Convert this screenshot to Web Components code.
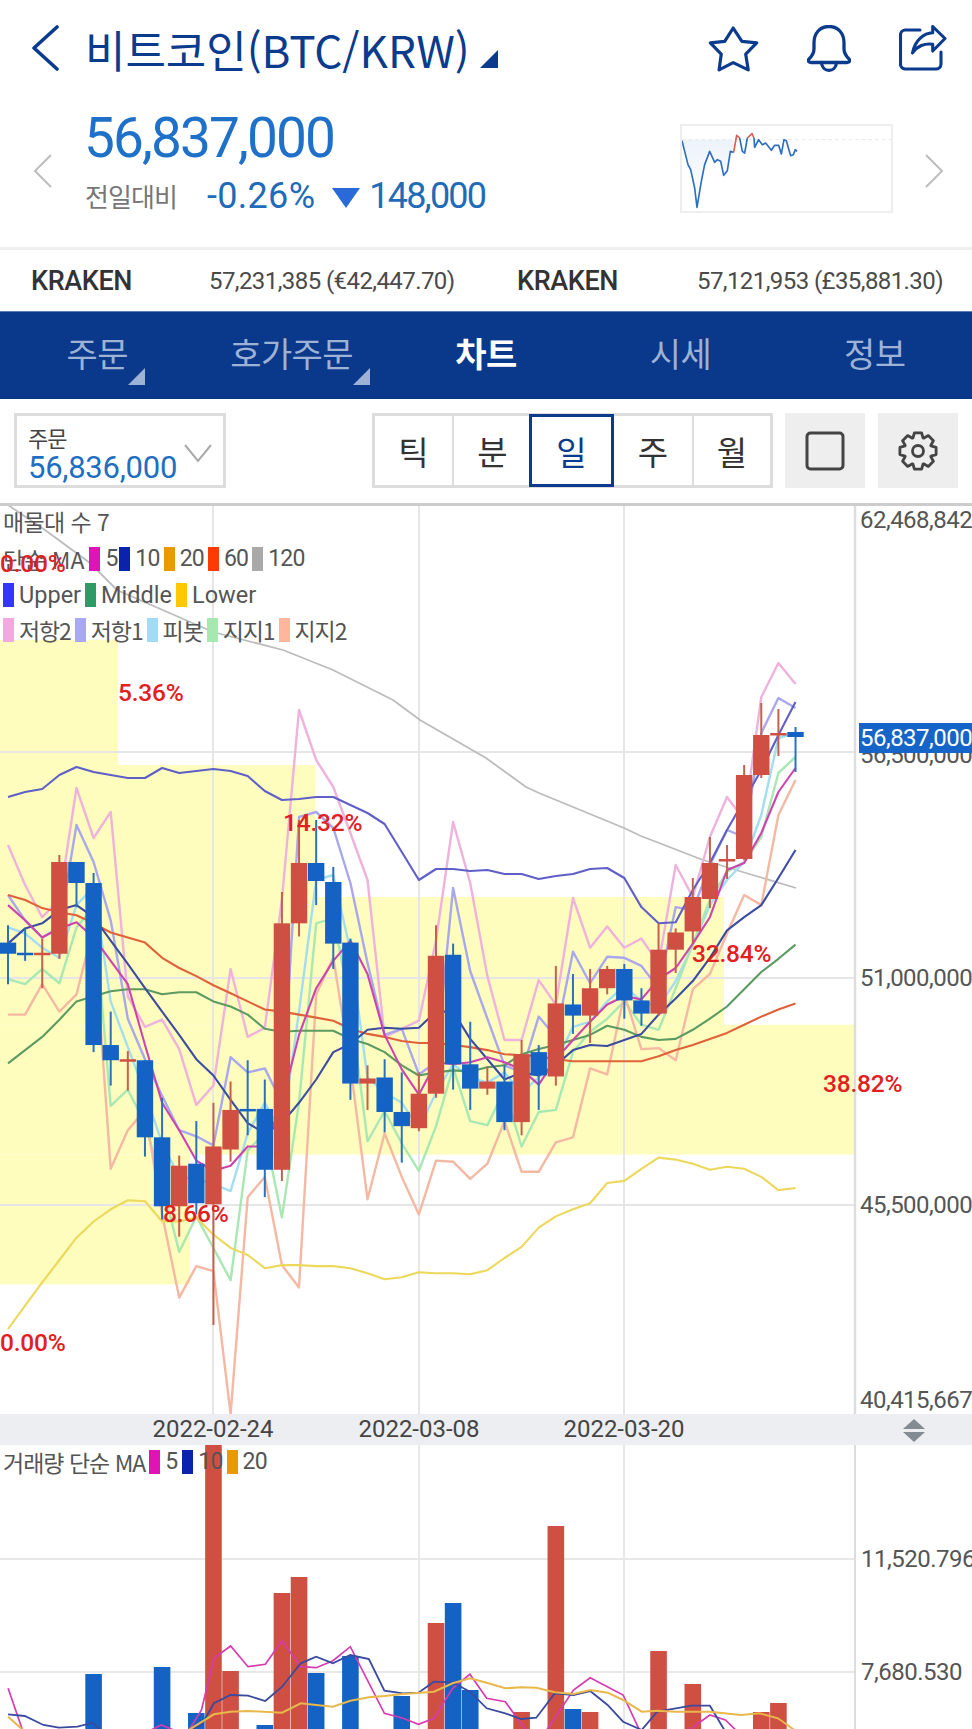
<!DOCTYPE html>
<html lang="ko"><head><meta charset="utf-8"><title>BTC</title>
<style>
html,body{margin:0;padding:0;background:#fff}
body{width:972px;height:1729px;overflow:hidden;font-family:"Noto Sans CJK KR","Noto Sans",sans-serif}
</style></head><body>
<coin-header>비트코인(BTC/KRW)</coin-header>
<price-panel></price-panel>
<exchange-row></exchange-row>
<nav-tabs></nav-tabs>
<chart-toolbar></chart-toolbar>
<candle-chart></candle-chart>
<time-axis></time-axis>
<volume-chart></volume-chart>
<script>
const FONT='"Noto Sans CJK KR","Noto Sans",sans-serif';
const NUM='Roboto,"Noto Sans CJK KR",sans-serif';
const NAVY='#0b3b8c';
class Base extends HTMLElement{
  constructor(){super();this.attachShadow({mode:'open'}).innerHTML=this.render();}
}
class CoinHeader extends Base{render(){return `<style>
:host{display:flex;align-items:flex-start;height:100px;box-sizing:border-box;padding:25px 25px 0 31px;color:${NAVY};position:relative}
.t{font:400 44px/46px ${FONT};letter-spacing:-.05px;margin:1px 0 0 26px;white-space:nowrap}
.tri{margin:25px 0 0 10px;flex:none}
.r{margin-left:auto;display:flex;gap:48px;align-items:flex-start}
svg{display:block;fill:none;stroke:${NAVY};stroke-linecap:round;stroke-linejoin:round;flex:none}
</style>
<svg width="28" height="46" viewBox="0 0 28 46" stroke-width="3.6"><path d="M26 2 L3 23 L26 44"/></svg>
<span class="t"><slot></slot></span>
<svg class="tri" width="18" height="18" viewBox="0 0 18 18" style="stroke:none;fill:${NAVY}"><path d="M18 0V18H0Z"/></svg>
<div class="r">
<svg width="52" height="48" viewBox="-2.7 -1.7 55 51" stroke-width="3.4"><path d="M25 1.500L34.300 15.700L50 17.300L38.300 29.300L41 46L25 38.300L10 46L12.300 29.300L.7 17.300L16 15.700Z"/></svg>
<svg width="44" height="48" viewBox="0 0 44 48" stroke-width="3.3"><path d="M22 1.500C13 1.500 7 8 7 18V24C7 29 4 32 2 34C.5 36 1.500 37.500 4 37.500H40C42.500 37.500 43.500 36 42 34C40 32 37 29 37 24V18C37 8 31 1.500 22 1.500Z"/><path d="M14.500 37.500C15 48 29 48 29.500 37.500"/></svg>
<svg width="48" height="46" viewBox="0 0 48 46" stroke-width="3.100"><path d="M21 5H6A5 5 0 0 0 1.500 10V39A5 5 0 0 0 6 44H37A5 5 0 0 0 42 39V27"/><path d="M13.500 28C16 15 25 8 33.700 7.700V1.500L46 13.500L33.700 26V19.300C26 18 18 21 13.500 28Z"/></svg>
</div>`}}
class PricePanel extends Base{render(){
 const pts=[[62,118],[70,150],[80,190],[88,205],[100,260],[107,318],[120,240],[130,190],[145,150],[160,183],[168,175],[178,180],[187,222],[198,208],[207,150],[217,153]];
 const p2=[[217,153],[226,102],[235,110]];
 const p3=[[235,110],[243,150],[250,155],[258,110]];
 const p4=[[258,110],[272,97],[278,110]];
 const p5=[[278,110],[280,138],[292,115],[303,130],[313,125],[330,147],[340,132],[352,132],[360,158],[368,115],[375,118],[388,163],[396,160],[402,145],[407,150]];
 const s=a=>a.map(p=>p.join(',')).join(' ');
 return `<style>
:host{display:flex;height:147px;position:relative;box-sizing:border-box;color:#1c68c0}
.arrow{position:absolute;top:54px;fill:none;stroke:#bdbdbd;stroke-width:2}
.col{margin-left:84px;padding-top:8px}
.big{font:400 55px/60px ${NUM};letter-spacing:-1.9px;color:#1f70c9}
.sub{display:flex;align-items:center;margin-top:10px;height:36px}
.l{font:400 26px/36px ${FONT};color:#777;letter-spacing:-.9px;width:123px;padding-left:1px;box-sizing:border-box}
.n{font:400 36px/36px ${NUM};letter-spacing:.3px;color:#1f6bb8}
.m{letter-spacing:-1.8px}
.dn{margin:3px 9px 0 17px;flex:none}
.mini{position:absolute;left:680px;top:24px;width:213px;height:89px;box-sizing:border-box;border:2px solid #eee}
</style>
<svg class="arrow" style="left:33px" width="20" height="34" viewBox="0 0 20 34"><path d="M18 1L2 17L18 33"/></svg>
<div class="col"><div class="big">56,837,000</div>
<div class="sub"><span class="l">전일대비</span><span class="n">-0.26%</span>
<svg class="dn" width="28" height="20" viewBox="0 0 28 20"><path d="M0 0H28L14 20Z" fill="#2a6ad8"/></svg>
<span class="n m">148,000</span></div></div>
<div class="mini"><svg width="209" height="85" viewBox="62 74 627 255" preserveAspectRatio="none" style="display:block;margin:0">
<defs><linearGradient id="g" x1="0" y1="0" x2="0" y2="1"><stop offset="0" stop-color="#edf3fb"/><stop offset="1" stop-color="#fff"/></linearGradient></defs>
<polygon points="${s(pts)} 217,115 62,115" fill="url(#g)"/>
<line x1="62" y1="115" x2="690" y2="115" stroke="#e6e6e6" stroke-width="3" stroke-dasharray="10 10"/>
<g fill="none" stroke-width="5" stroke-linejoin="round"><polyline points="${s(pts)}" stroke="#2f6fc0"/><polyline points="${s(p2)}" stroke="#d4605c"/><polyline points="${s(p3)}" stroke="#2f6fc0"/><polyline points="${s(p4)}" stroke="#d4605c"/><polyline points="${s(p5)}" stroke="#2f6fc0"/></g></svg></div>
<svg class="arrow" style="left:924px" width="20" height="34" viewBox="0 0 20 34"><path d="M2 1L18 17L2 33"/></svg>`}}
class ExchangeRow extends Base{render(){return `<style>
:host{display:block;border-top:3px solid #eee;height:64px;box-sizing:border-box;position:relative;color:#444}
.w{display:grid;grid-template-columns:178px 308px 180px 1fr;align-items:center;height:100%;padding:1px 0 0 31px;box-sizing:border-box}
b{font:500 27px/34px Roboto,sans-serif;letter-spacing:-.4px;color:#333}
span{font:400 24px/34px Roboto,sans-serif;letter-spacing:-.58px;color:#4a4a4a;white-space:nowrap}
</style><div class="w"><b>KRAKEN</b><span>57,231,385 (€42,447.70)</span><b>KRAKEN</b><span>57,121,953 (£35,881.30)</span></div>`}}
class NavTabs extends Base{render(){
 const t=[['주문',1],['호가주문',1],['차트',0,1],['시세'],['정보']];
 return `<style>
:host{display:grid;grid-template-columns:repeat(5,1fr);height:88px;background:#0a388a;border-top:1px solid #5b7fb5;box-sizing:border-box;color:#9db2d4}
div{display:flex;justify-content:center;align-items:center;font:400 34px/40px ${FONT};padding-bottom:5px;position:relative;letter-spacing:-.6px}
.on{color:#fff;font-weight:700}
span{position:relative}
svg{position:absolute;left:100%;top:35px;margin-left:0}
</style>${t.map(x=>`<div class="${x[2]?'on':''}"><span>${x[0]}${x[1]?'<svg width="17" height="17" viewBox="0 0 17 17"><path d="M17 0V17H0Z" fill="#9db2d4"/></svg>':''}</span></div>`).join('')}`}}
class ChartToolbar extends Base{render(){
 let g='';const N=8;for(let i=0;i<N;i++){const a=i/N*Math.PI*2-Math.PI/2,d=Math.PI/N;
  const P=(r,b)=>(20+r*Math.cos(b)).toFixed(1)+' '+(20+r*Math.sin(b)).toFixed(1);
  g+=(i?'L':'M')+P(14,a-d*.95)+'L'+P(18.500,a-d*.5)+'L'+P(18.500,a+d*.5)+'L'+P(14,a+d*.95);}
 return `<style>
:host{display:flex;height:107px;box-sizing:border-box;padding:14px 0 0 14px;border-bottom:3px solid #ccc;align-items:flex-start}
.sel{flex:none;width:212px;height:75px;box-sizing:border-box;border:3px solid #ddd;padding:9px 0 0 11px;position:relative}
.a{font:400 22px/24px ${FONT};color:#444;display:block;letter-spacing:-1px}
.b{font:400 31px/34px ${NUM};color:#1f6fc0;display:block;letter-spacing:-.25px;margin-top:2px;white-space:nowrap}
.sel svg{position:absolute;right:11px;top:27px}
.seg{flex:none;margin-left:146px;display:grid;grid-template-columns:77px 79px 81px 80px 78px;height:75px;box-sizing:border-box;border:3px solid #ddd;position:relative}
.seg div{display:flex;align-items:center;justify-content:center;font:400 33px/40px ${FONT};color:#333;border-left:2px solid #ddd}
.seg div:first-child{border-left:0}
.seg .on{color:${NAVY};outline:3px solid ${NAVY};outline-offset:-1px;z-index:1;border-left:0}
.btn{flex:none;width:80px;height:75px;background:#eee;display:flex;align-items:center;justify-content:center;margin-left:12px}
.btn+.btn{margin-left:13px}
</style>
<div class="sel"><span class="a">주문</span><span class="b">56,836,000</span><svg width="28" height="20" viewBox="0 0 28 20"><path d="M1 2L14 18L27 2" fill="none" stroke="#aaa" stroke-width="2"/></svg></div>
<div class="seg"><div>틱</div><div>분</div><div class="on">일</div><div>주</div><div>월</div></div>
<div class="btn"><svg width="40" height="40" viewBox="0 0 40 40"><rect x="2" y="2" width="36" height="36" rx="3.500" fill="none" stroke="#444" stroke-width="3"/></svg></div>
<div class="btn"><svg width="40" height="40" viewBox="0 0 40 40" fill="none" stroke="#444" stroke-width="2.800" stroke-linejoin="round"><path d="${g}Z"/><circle cx="20" cy="20" r="5.500"/></svg></div>`}}
const X=i=>8+17.12*i, Y=y=>y>900?900+(y-900)*1.0142:y;
const poly=(a,c,w=2.1)=>`<polyline fill="none" stroke="${c}" stroke-width="${w}" stroke-linejoin="round" points="${a.map((y,i)=>X(i).toFixed(1)+','+Y(y).toFixed(1)).join(' ')}"/>`;
const R2=[845,885,917,900,788,838,812,995,1025,1018,1047,1102,1083,968,1035,1026,900,710,760,787,833,880,1035,1027,1019,940,822,883,975,1038,1038,979,1003,898,947,926,947,938,963,865,897,837,797,820,697,663,684];
const R1=[895,920,937,927,825,862,920,1017,1057,1093,1127,1133,1142,1055,1070,1066,1100,817,812,828,883,962,1033,1027,1072,1060,888,970,1017,1063,1070,1015,1035,951,982,956,957,965,987,907,910,865,830,837,733,698,708];
const PV=[927,933,947,957,905,887,1000,1045,1090,1140,1173,1175,1180,1187,1130,1100,1130,1010,880,875,950,1075,1090,1100,1125,1090,1062,1075,1080,1070,1090,1075,1060,1025,1020,1000,985,1000,1005,980,945,905,880,862,815,738,733];
const S1=[978,983,968,982,927,907,1103,1087,1120,1180,1247,1212,1243,1275,1147,1130,1213,1100,923,918,1003,1138,1108,1140,1167,1123,1065,1118,1122,1087,1143,1109,1107,1050,1030,1017,1000,1023,1028,987,943,900,872,862,837,773,757];
const S2=[1013,1013,983,1010,993,927,1165,1127,1107,1210,1292,1261,1266,1407,1193,1173,1260,1282,993,957,1063,1195,1130,1173,1210,1157,1158,1175,1160,1118,1168,1168,1139,1134,1066,1072,993,1047,1046,1058,988,973,933,895,905,815,780];
const UP=[797,792,789,775,767,772,775,778,778,768,773,771,769,771,776,791,800,799,797,797,805,813,824,852,880,869,869,871,870,874,874,879,876,874,869,868,878,907,923,922,890,863,830,800,770,735,702];
const MD=[1061,1048,1035,1018,1000,995,990,988,988,993,991,991,1000,1005,1013,1027,1030,1029,1029,1029,1037,1042,1050,1063,1073,1070,1068,1069,1065,1063,1052,1047,1043,1038,1033,1024,1028,1035,1038,1037,1028,1017,1005,988,971,958,944];
const LO=[1323,1300,1277,1255,1233,1217,1205,1196,1197,1217,1217,1213,1230,1243,1250,1263,1260,1260,1261,1261,1263,1268,1274,1272,1267,1268,1268,1269,1265,1253,1242,1223,1212,1205,1199,1179,1177,1165,1154,1156,1160,1166,1163,1165,1173,1186,1184];
const M5=[905,920,937,928,922,937,960,983,1043,1100,1127,1157,1167,1162,1143,1143,1100,1033,987,960,940,973,1033,1067,1092,1060,1062,1060,1055,1060,1067,1082,1057,1038,1020,1003,995,998,978,967,943,917,870,863,833,792,768];
const M10=[943,928,923,910,905,917,940,963,987,1010,1033,1057,1073,1097,1120,1130,1120,1100,1077,1050,1042,1028,1026,1027,1026,1010,1010,1037,1057,1077,1070,1073,1063,1048,1043,1044,1038,1032,1013,997,980,957,930,917,905,878,850];
const M60=[895,900,908,912,915,923,932,937,942,957,967,975,984,992,1000,1008,1010,1013,1016,1019,1027,1032,1035,1039,1041,1041,1043,1045,1048,1052,1053,1054,1057,1059,1059,1059,1059,1059,1054,1048,1043,1037,1031,1023,1015,1008,1002];
const M120='8,505 45,530 90,563 117,590 213,632 283,650 333,670 393,700 420,720 486,758 526,787 539,793 573,807 624,828 641,836 703,860 746,873 796,888';
const C=[['b',942,953,925,983],['b',952,954,928,960],['r',952,954,938,987],['r',862,953,855,958],['b',862,883,862,907],['b',883,1043,873,1050],['b',1043,1058,1010,1083],['r',1057,1059,1049,1088],['b',1058,1134,1058,1153],['b',1134,1202,1095,1215],['r',1162,1202,1152,1232],['b',1160,1199,1118,1210],['r',1143,1200,1100,1319],['r',1107,1146,1079,1158],['b',1106,1108,1058,1132],['b',1106,1166,1077,1193],['r',923,1166,892,1177],['r',863,923,820,936],['b',863,881,820,905],['b',882,943,867,968],['b',942,1081,938,1097],['r',1076,1081,1063,1107],['b',1075,1109,1057,1129],['b',1109,1123,1070,1159],['r',1091,1125,1070,1128],['r',955,1091,925,1095],['b',954,1062,943,1087],['b',1062,1086,1020,1107],['r',1079,1086,1064,1092],['b',1079,1119,1063,1127],['r',1052,1119,1038,1132],['b',1050,1073,1043,1107],['r',1002,1074,965,1083],['b',1003,1014,973,1032],['r',987,1014,968,1041],['r',968,987,965,993],['b',968,999,963,1017],['b',999,1012,987,1024],['r',949,1012,923,1014],['r',932,949,928,972],['r',897,931,878,943],['r',863,899,837,908],['r',859,861,845,879],['r',775,859,765,860],['r',735,775,703,778],['r',733,735,709,756],['b',732,737,727,772]];
const candles=()=>C.map((c,i)=>{const x=X(i),col=c[0]=='r'?'#cf4f42':'#1463c4',wc=c[0]=='r'?'#c5604e':'#2a72bd';
 return `<line x1="${x}" x2="${x}" y1="${Y(c[3])}" y2="${Y(c[4])}" stroke="${wc}" stroke-width="2"/><rect x="${x-8.2}" width="16.4" y="${Y(c[1])}" height="${Math.max(Y(c[2])-Y(c[1]),2.500)}" fill="${col}"/>`}).join('');
class CandleChart extends Base{render(){
 const box=(w,a,b)=>`<rect x="0" y="${Y(a)}" width="${w}" height="${Y(b)-Y(a)}" fill="#fefdbd"/>`;
 const pct=[['0.00%',0,563],['5.36%',118,692],['14.32%',283,822],['8.66%',163,1213],['0.00%',0,1342],['32.84%',692,953],['38.82%',823,1083]];
 const ax=[['62,468,842',520],['56,500,000',755],['51,000,000',978],['45,500,000',1205],['40,415,667',1400]];
 const sw=(c,s='')=>`<i style="background:${c};${s}"></i>`;
 return `<style>
:host{display:block;height:908px;position:relative;overflow:hidden}
svg{position:absolute;left:0;top:0;display:block}
.p{font:500 24.500px ${NUM};fill:#e1201f;letter-spacing:-.2px}
.a{font:400 24px Roboto,sans-serif;fill:#555;letter-spacing:-.52px}
.leg{position:absolute;left:3px;top:0;display:flex;flex-direction:column;font:400 23px/26px ${NUM};color:#555}
.leg div{display:flex;align-items:center;height:36.500px;box-sizing:border-box;white-space:nowrap}
i{display:block;width:11px;height:24px;margin:0 5px 0 4px}
i:first-child{margin-left:0}
.ko{font-family:${FONT};letter-spacing:-1.1px}
.d{letter-spacing:-.8px}
.tag{position:absolute;left:859px;top:217px;width:113px;height:30px;background:#1565c8;color:#fff;font:400 24px/30px Roboto,sans-serif;letter-spacing:-.52px;padding-left:1px;box-sizing:border-box;white-space:nowrap;overflow:hidden}
</style>
<svg width="972" height="908" viewBox="0 506 972 908">
${box(118,640,765)}${box(315,765,897)}${box(724,897,1023)}${box(855,1023,1151)}${box(190,1151,1279)}
<g stroke="#e6e6e6" stroke-width="2">${[752,978,1205].map(y=>`<line x1="0" x2="855" y1="${y}" y2="${y}"/>`).join('')}${[213,419,624].map(x=>`<line y1="506" y2="1414" x1="${x}" x2="${x}"/>`).join('')}</g>
<line x1="855" x2="855" y1="506" y2="1414" stroke="#ddd" stroke-width="2.500"/>
<polyline points="${M120}" fill="none" stroke="#bcbcbc" stroke-width="1.800"/>
${poly(R2,'#efb2dd',2.4)}${poly(R1,'#a9a8ee',2.4)}${poly(PV,'#a2def0',2.4)}${poly(S1,'#a9e8b3',2.4)}${poly(S2,'#f5b8a2',2.4)}
${poly(LO,'#ecd85a')}${poly(MD,'#5c9a62')}${poly(UP,'#5f5fc8')}${poly(M60,'#e0623a')}${poly(M10,'#3c4ca0')}${poly(M5,'#cc44ae')}
${candles()}
${ax.map(a=>`<text class="a" x="860" y="${a[1]}" dominant-baseline="central">${a[0]}</text>`).join('')}
</svg>
<div class="leg"><div style="height:34.500px;padding-bottom:4.500px"><span class="ko" style="letter-spacing:-.6px">매물대 수 7</span></div>
<div><span class="ko" style="letter-spacing:0">단순 MA</span>${sw('#e014b4','margin-left:5px')}5${sw('#0a22ac','margin-left:1px')}<span class="d">10</span>${sw('#ea9a00')}<span class="d">20</span>${sw('#ff3a00')}<span class="d">60</span>${sw('#a9a9a9')}<span class="d">120</span></div>
<div style="font-size:23.500px">${sw('#3535ff')}Upper${sw('#2e9a66')}Middle${sw('#ffc800')}Lower</div>
<div style="padding-bottom:3px">${sw('#f3a8e0')}<span class="ko">저항2</span>${sw('#a9a8f5')}<span class="ko">저항1</span>${sw('#a0dcf5')}<span class="ko">피봇</span>${sw('#a5e8b0')}<span class="ko">지지1</span>${sw('#ffb69c')}<span class="ko">지지2</span></div></div>
<svg width="972" height="908" viewBox="0 506 972 908">${pct.map(p=>`<text class="p" x="${p[1]}" y="${p[2]}" dominant-baseline="central">${p[0]}</text>`).join('')}</svg>
<div class="tag">56,837,000</div>`}}
class TimeAxis extends Base{render(){return `<style>
:host{display:block;height:31px;background:#eceef2;position:relative;font:400 24px/31px Roboto,sans-serif;color:#444;letter-spacing:0}
span{position:absolute;top:0;transform:translateX(-50%);white-space:nowrap}
svg{position:absolute;left:902px;top:5px}
</style><span style="left:213px">2022-02-24</span><span style="left:419px">2022-03-08</span><span style="left:624px">2022-03-20</span>
<svg width="24" height="23" viewBox="0 0 24 23" fill="#858b93"><path d="M12 0L23 10H1Z"/><path d="M1 13H23L12 23Z"/></svg>`}}
class VolumeChart extends Base{render(){
 const B=[['r',12,1445],['r',13,1671],['r',16,1593],['r',17,1577],['b',11,1713],['b',5,1674],['b',9,1667],['b',15,1725],['b',18,1673],['b',20,1656],['b',23,1696],['r',25,1623],['b',26,1603],['b',27,1690],['r',30,1712],['r',32,1526],['b',33,1709],['r',34,1712],['r',38,1651],['r',40,1684],['r',44,1712],['r',45,1703]];
 const conv=s=>s.map(p=>(p[0]/1.613).toFixed(1)+','+(1410+p[1]/3).toFixed(1)).join(' ');
 const m5=[[13,835],[38,970],[200,1000],[260,945],[300,975],[325,900],[345,745],[372,708],[400,770],[428,763],[455,692],[485,770],[510,773],[537,752],[565,710],[620,910],[650,925],[675,943],[700,925],[730,835],[758,793],[785,865],[815,875],[850,965],[880,965],[925,840],[952,803],[1005,855],[1035,975],[1100,975],[1145,915],[1170,930],[1195,975]];
 const m10=[[13,913],[40,918],[70,945],[95,953],[125,950],[150,938],[165,965],[300,965],[325,945],[345,880],[372,855],[400,857],[428,873],[455,830],[485,760],[510,740],[537,760],[565,735],[595,747],[620,842],[650,850],[675,848],[700,815],[730,817],[758,845],[785,895],[815,910],[840,927],[865,923],[895,850],[925,855],[952,843],[980,885],[1005,935],[1035,960],[1060,905],[1090,895],[1115,887],[1145,887],[1170,965]];
 const m20=[[13,920],[40,965],[300,965],[345,913],[372,905],[400,903],[455,908],[485,880],[510,885],[537,890],[565,872],[595,862],[620,858],[650,852],[700,845],[730,820],[758,805],[785,818],[815,835],[840,832],[865,833],[895,847],[925,852],[952,840],[980,848],[1005,870],[1035,905],[1060,902],[1090,905],[1145,905],[1195,915],[1225,910],[1255,925],[1285,965]];
 const sw=c=>`<i style="background:${c}"></i>`;
 return `<style>
:host{display:block;height:284px;position:relative;overflow:hidden}
svg{position:absolute;left:0;top:0;display:block}
.a{font:400 24px Roboto,sans-serif;fill:#555;letter-spacing:-.5px}
.leg{position:absolute;left:3px;top:5px;display:flex;align-items:center;height:24px;font:400 23px/24px ${NUM};color:#555;white-space:nowrap}
i{display:block;width:11px;height:24px;margin:0 5px 0 4px}
.ko{font-family:${FONT};letter-spacing:-1px}
.d{letter-spacing:-.8px}
</style>
<svg width="972" height="284" viewBox="0 1445 972 284">
<g stroke="#e8e8e8" stroke-width="2">${[1559,1672].map(y=>`<line x1="0" x2="855" y1="${y}" y2="${y}"/>`).join('')}${[213,419,624].map(x=>`<line y1="1445" y2="1729" x1="${x}" x2="${x}"/>`).join('')}</g>
<line x1="855" x2="855" y1="1445" y2="1729" stroke="#ddd" stroke-width="2"/>
${B.map(b=>`<rect x="${X(b[1])-8.300}" width="16.600" y="${b[2]}" height="${1735-b[2]}" fill="${b[0]=='r'?'#cf4f42':'#1463c4'}"/>`).join('')}
<polyline points="${conv(m5)}" fill="none" stroke="#d83ab0" stroke-width="1.700"/>
<polyline points="${conv(m10)}" fill="none" stroke="#3a4a9e" stroke-width="1.800"/>
<polyline points="${conv(m20)}" fill="none" stroke="#e8b84a" stroke-width="2"/>
<text class="a" x="861" y="1559" dominant-baseline="central">11,520.796</text>
<text class="a" x="861" y="1672" dominant-baseline="central">7,680.530</text>
</svg>
<div class="leg"><span class="ko">거래량 단순 MA</span>${sw('#e014b4')}5${sw('#0a22ac')}<span class="d">10</span>${sw('#ea9a00')}<span class="d">20</span></div>`}}
customElements.define('coin-header',CoinHeader);
customElements.define('price-panel',PricePanel);
customElements.define('exchange-row',ExchangeRow);
customElements.define('nav-tabs',NavTabs);
customElements.define('chart-toolbar',ChartToolbar);
customElements.define('candle-chart',CandleChart);
customElements.define('time-axis',TimeAxis);
customElements.define('volume-chart',VolumeChart);
</script></body></html>
